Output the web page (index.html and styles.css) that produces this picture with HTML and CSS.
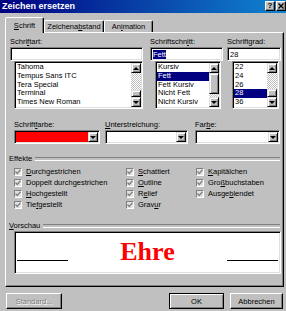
FILE: index.html
```html
<!DOCTYPE html>
<html>
    <head>
        <title>Zeichen ersetzen</title>
        <meta charset="UTF-8">
        <link rel="stylesheet" href="styles.css">
    </head>
    <body>
        <div class="titlebar">
            <span class="title">Zeichen ersetzen</span>
            <div class="tbtns">
                <span class="tbtn">?</span>
                <span class="tbtn">
                    <svg width="6" height="6" viewBox="0 0 6 6"><path d="M0.5 0.5 L5.5 5.5 M5.5 0.5 L0.5 5.5" stroke="#000" stroke-width="1.4"/></svg>
                </span>
            </div>
        </div>

        <div class="tabs">
            <div class="tab active t1"><span><u>S</u>chrift</span></div>
            <div class="tab t2"><span>Zeichena<u>b</u>stand</span></div>
            <div class="tab t3"><span>An<u>i</u>mation</span></div>
        </div>

        <div class="panel">
            <div class="fontrow">
                <div class="fcol1">
                    <div class="lbl">Schri<u>f</u>tart:</div>
                    <div class="field"></div>
                    <div class="list l1">
                        <div class="items">
                            <div class="item">Tahoma</div>
                            <div class="item">Tempus Sans ITC</div>
                            <div class="item">Tera Special</div>
                            <div class="item">Terminal</div>
                            <div class="item">Times New Roman</div>
                        </div>
                        <div class="scroll">
                            <div class="sbtn"><span class="arr-up"></span></div>
                            <div class="track end"><div class="thumb th1"></div></div>
                            <div class="sbtn"><span class="arr-down"></span></div>
                        </div>
                    </div>
                </div>
                <div class="fcol2">
                    <div class="lbl">Schriftschn<u>i</u>tt:</div>
                    <div class="field"><span class="sel">Fett</span></div>
                    <div class="list l2">
                        <div class="items">
                            <div class="item">Kursiv</div>
                            <div class="item on">Fett</div>
                            <div class="item">Fett Kursiv</div>
                            <div class="item">Nicht Fett</div>
                            <div class="item">Nicht Kursiv</div>
                        </div>
                        <div class="scroll">
                            <div class="sbtn"><span class="arr-up"></span></div>
                            <div class="track"><div class="thumb th2"></div></div>
                            <div class="sbtn"><span class="arr-down"></span></div>
                        </div>
                    </div>
                </div>
                <div class="fcol3">
                    <div class="lbl">Schriftgrad:</div>
                    <div class="field">28</div>
                    <div class="list l3">
                        <div class="items">
                            <div class="item">22</div>
                            <div class="item">24</div>
                            <div class="item">26</div>
                            <div class="item on">28</div>
                            <div class="item">36</div>
                        </div>
                        <div class="scroll">
                            <div class="sbtn"><span class="arr-up"></span></div>
                            <div class="track end"><div class="thumb th3"></div></div>
                            <div class="sbtn"><span class="arr-down"></span></div>
                        </div>
                    </div>
                </div>
            </div>

            <div class="colorrow">
                <div class="ccol1">
                    <div class="lbl">Schrift<u>f</u>arbe:</div>
                    <div class="combo"><div class="val red"></div><div class="dd"><span class="arr-down"></span></div></div>
                </div>
                <div class="ccol2">
                    <div class="lbl"><u>U</u>nterstreichung:</div>
                    <div class="combo"><div class="val"></div><div class="dd"><span class="arr-down"></span></div></div>
                </div>
                <div class="ccol3">
                    <div class="lbl">Far<u>b</u>e:</div>
                    <div class="combo"><div class="val"></div><div class="dd"><span class="arr-down"></span></div></div>
                </div>
            </div>

            <div class="sep sep-fx"><span>Effekte</span></div>
            <div class="checks">
                <div class="chk"><span class="box"><svg width="6" height="6" viewBox="0 0 6 6"><path d="M0.5 2.5 L2.3 4.5 L5.5 0.8" fill="none" stroke="#808080" stroke-width="1.3"/></svg></span><span><u>D</u>urchgestrichen</span></div>
                <div class="chk"><span class="box"><svg width="6" height="6" viewBox="0 0 6 6"><path d="M0.5 2.5 L2.3 4.5 L5.5 0.8" fill="none" stroke="#808080" stroke-width="1.3"/></svg></span><span>Doppelt durchgestrichen</span></div>
                <div class="chk"><span class="box"><svg width="6" height="6" viewBox="0 0 6 6"><path d="M0.5 2.5 L2.3 4.5 L5.5 0.8" fill="none" stroke="#808080" stroke-width="1.3"/></svg></span><span><u>H</u>ochgestellt</span></div>
                <div class="chk"><span class="box"><svg width="6" height="6" viewBox="0 0 6 6"><path d="M0.5 2.5 L2.3 4.5 L5.5 0.8" fill="none" stroke="#808080" stroke-width="1.3"/></svg></span><span>Tie<u>f</u>gestellt</span></div>
                <div class="chk"><span class="box"><svg width="6" height="6" viewBox="0 0 6 6"><path d="M0.5 2.5 L2.3 4.5 L5.5 0.8" fill="none" stroke="#808080" stroke-width="1.3"/></svg></span><span><u>S</u>chattiert</span></div>
                <div class="chk"><span class="box"><svg width="6" height="6" viewBox="0 0 6 6"><path d="M0.5 2.5 L2.3 4.5 L5.5 0.8" fill="none" stroke="#808080" stroke-width="1.3"/></svg></span><span><u>O</u>utline</span></div>
                <div class="chk"><span class="box"><svg width="6" height="6" viewBox="0 0 6 6"><path d="M0.5 2.5 L2.3 4.5 L5.5 0.8" fill="none" stroke="#808080" stroke-width="1.3"/></svg></span><span>R<u>e</u>lief</span></div>
                <div class="chk"><span class="box"><svg width="6" height="6" viewBox="0 0 6 6"><path d="M0.5 2.5 L2.3 4.5 L5.5 0.8" fill="none" stroke="#808080" stroke-width="1.3"/></svg></span><span>Grav<u>u</u>r</span></div>
                <div class="chk"><span class="box"><svg width="6" height="6" viewBox="0 0 6 6"><path d="M0.5 2.5 L2.3 4.5 L5.5 0.8" fill="none" stroke="#808080" stroke-width="1.3"/></svg></span><span><u>K</u>apitälchen</span></div>
                <div class="chk"><span class="box"><svg width="6" height="6" viewBox="0 0 6 6"><path d="M0.5 2.5 L2.3 4.5 L5.5 0.8" fill="none" stroke="#808080" stroke-width="1.3"/></svg></span><span>Gro<u>ß</u>buchstaben</span></div>
                <div class="chk"><span class="box"><svg width="6" height="6" viewBox="0 0 6 6"><path d="M0.5 2.5 L2.3 4.5 L5.5 0.8" fill="none" stroke="#808080" stroke-width="1.3"/></svg></span><span>Ausge<u>b</u>lendet</span></div>
            </div>

            <div class="sep sep-pv"><span><u>V</u>orschau</span></div>
            <div class="preview">
                <span class="pline"></span>
                <span class="ptext">Ehre</span>
                <span class="pline"></span>
            </div>
        </div>

        <div class="btnrow">
            <div class="btn b-std"><span class="dis">Standard...</span></div>
            <div class="spacer"></div>
            <div class="btn def b-ok">OK</div>
            <div class="btn b-cancel">Abbrechen</div>
        </div>
    </body>
</html>
```

FILE: styles.css
```css
* {
    margin: 0;
    padding: 0;
    box-sizing: border-box;
}
body {
    width: 286px;
    height: 311px;
    overflow: hidden;
    background-color: #c0c0c0;
    font-family: "Liberation Sans", Arial, sans-serif;
    font-size: 7.5px;
    color: #000;
}
u {
    text-decoration-thickness: 1px;
    text-underline-offset: 1px;
}

/* title bar */
.titlebar {
    height: 13px;
    display: flex;
    justify-content: space-between;
    align-items: flex-start;
    padding-left: 2px;
    background: linear-gradient(to right, #000080, #1084d0);
}
.title {
    color: #fff;
    font-weight: bold;
    font-size: 9px;
    line-height: 13px;
}
.tbtns {
    display: flex;
    padding-top: 1px;
    gap: 1px;
}
.tbtn {
    width: 10px;
    height: 10px;
    display: flex;
    justify-content: center;
    align-items: center;
    background-color: #c0c0c0;
    border: 1px solid;
    border-color: #fff #000 #000 #fff;
    box-shadow: inset -1px -1px #808080;
    font-weight: bold;
    font-size: 8px;
    line-height: 8px;
}

/* tabs */
.tabs {
    height: 19px;
    display: flex;
    align-items: flex-end;
    padding-left: 5px;
}
.tab {
    height: 12px;
    display: flex;
    justify-content: center;
    align-items: center;
    border: 1px solid;
    border-bottom: none;
    border-color: #fff #000 transparent #fff;
    box-shadow: inset -1px 0 #808080;
    border-radius: 2px 2px 0 0;
    white-space: nowrap;
}
.tab.active {
    height: 16px;
    margin-bottom: -1px;
    position: relative;
    z-index: 1;
    background-color: #c0c0c0;
    padding-bottom: 1px;
}
.t1 { width: 39px; }
.t2 { width: 60px; }
.t3 { width: 49px; }

.panel {
    margin-left: 5px;
    width: 279px;
    height: 255px;
    padding-top: 4px;
    border: 1px solid;
    border-color: #fff #000 #000 #fff;
    box-shadow: inset -1px -1px #808080;
}

.lbl {
    height: 10px;
    line-height: 10px;
    white-space: nowrap;
}

/* sunken controls */
.field, .list, .combo, .preview {
    background-color: #fff;
    border: 1px solid;
    border-color: #808080 #fff #fff #808080;
    box-shadow: inset 1px 1px #000, inset -1px -1px #dfdfdf;
}
.field {
    height: 14px;
    padding: 0 2px;
    line-height: 14px;
}
.sel {
    background-color: #000080;
    color: #fff;
}

.fontrow {
    display: flex;
}
.fcol1 { margin-left: 4px; width: 133px; }
.fcol2 { margin-left: 7px; width: 73px; }
.fcol3 { margin-left: 4px; width: 54px; }

.list {
    display: flex;
    height: 48px;
    padding: 1px;
}
.l1 { margin-left: 4px; }
.l2 { margin-left: 5px; width: 66px; }
.l3 { margin-left: 5px; width: 47px; }
.items {
    flex: 1;
    overflow: hidden;
}
.item {
    height: 8.8px;
    line-height: 8.8px;
    padding-left: 1px;
    white-space: nowrap;
}
.item.on {
    background-color: #000080;
    color: #fff;
}

/* scrollbars */
.scroll {
    width: 10px;
    display: flex;
    flex-direction: column;
}
.sbtn, .dd, .thumb {
    background-color: #c0c0c0;
    border: 1px solid;
    border-color: #dfdfdf #000 #000 #dfdfdf;
    box-shadow: inset 1px 1px #fff, inset -1px -1px #808080;
}
.sbtn {
    height: 10px;
    display: flex;
    justify-content: center;
    align-items: center;
}
.track {
    flex: 1;
    display: flex;
    flex-direction: column;
    background: repeating-conic-gradient(#fff 0 25%, #c0c0c0 0 50%) 0 0 / 2px 2px;
}
.track.end {
    justify-content: flex-end;
}
.th1 { height: 7px; }
.th2 { height: 21px; }
.th3 { height: 8px; }
.arr-up {
    width: 0;
    height: 0;
    border-left: 3px solid transparent;
    border-right: 3px solid transparent;
    border-bottom: 3px solid #000;
}
.arr-down {
    width: 0;
    height: 0;
    border-left: 3px solid transparent;
    border-right: 3px solid transparent;
    border-top: 3px solid #000;
}

/* colour row */
.colorrow {
    display: flex;
    margin-top: 11px;
}
.ccol1 { margin-left: 8px; width: 86px; }
.ccol2 { margin-left: 5px; width: 83px; }
.ccol3 { margin-left: 7px; width: 85px; }
.combo {
    display: flex;
    height: 14px;
    padding: 1px;
}
.combo .val {
    flex: 1;
}
.combo .val.red {
    background-color: #ff0000;
}
.dd {
    width: 10px;
    display: flex;
    justify-content: center;
    align-items: center;
}

/* separators */
.sep {
    display: flex;
    align-items: center;
    gap: 3px;
    height: 9px;
    line-height: 9px;
    margin-left: 3px;
    margin-right: 3px;
}
.sep::after {
    content: "";
    flex: 1;
    height: 2px;
    border-top: 1px solid #808080;
    border-bottom: 1px solid #fff;
}
.sep-fx { margin-top: 10px; }
.sep-pv { margin-top: 11px; }

.checks {
    display: grid;
    grid-template-columns: 112px 70px 1fr;
    grid-template-rows: repeat(4, 11px);
    grid-auto-flow: column;
    margin-top: 3px;
    margin-left: 8px;
}
.chk {
    display: flex;
    align-items: center;
    gap: 4px;
    white-space: nowrap;
}
.box {
    width: 8px;
    height: 8px;
    display: flex;
    justify-content: center;
    align-items: center;
    background-color: #e4e4e4;
    border: 1px solid;
    border-color: #808080 #fff #fff #808080;
}

/* preview */
.preview {
    margin-top: 1px;
    margin-left: 8px;
    width: 267px;
    height: 43px;
    padding: 2px;
    display: flex;
    justify-content: space-between;
    align-items: flex-end;
}
.pline {
    width: 51px;
    height: 1px;
    background-color: #000;
    margin-bottom: 10px;
}
.ptext {
    font-family: "Liberation Serif", "Times New Roman", serif;
    font-weight: bold;
    font-size: 26px;
    line-height: 26px;
    color: #ff0000;
    margin-bottom: 6px;
}

/* buttons */
.btnrow {
    display: flex;
    margin-top: 6px;
    padding: 0 3px 0 6px;
}
.spacer {
    flex: 1;
}
.btn {
    height: 16px;
    display: flex;
    justify-content: center;
    align-items: center;
    background-color: #c0c0c0;
    border: 1px solid;
    border-color: #fff #000 #000 #fff;
    box-shadow: inset -1px -1px #808080;
}
.btn.def {
    border-color: #000;
    box-shadow: inset 1px 1px #fff, inset -1px -1px #808080;
}
.b-std { width: 56px; }
.b-ok { width: 55px; }
.b-cancel { width: 53px; margin-left: 6px; }
.dis {
    color: #808080;
    text-shadow: 1px 1px #fff;
}
```
